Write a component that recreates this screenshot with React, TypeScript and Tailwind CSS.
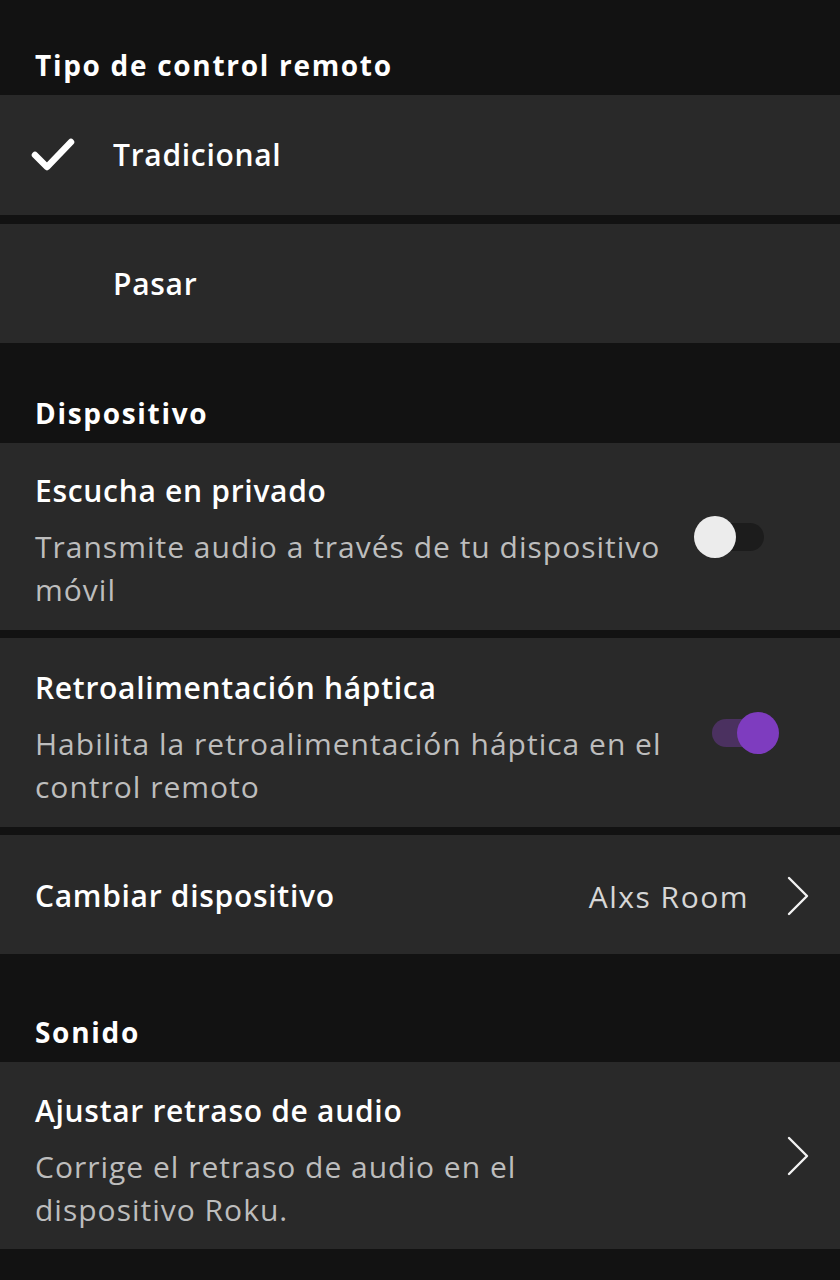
import React from "react";

const font = { fontFamily: '"Open Sans", "Liberation Sans", sans-serif' };

function SectionHeader({ title, h }: { title: string; h: string }) {
  return (
    <div className={`flex items-end px-[35px] pb-[12px] ${h}`}>
      <div className="text-[28px] leading-[36px] font-bold text-white tracking-[1.7px]">{title}</div>
    </div>
  );
}

function Toggle({ on }: { on: boolean }) {
  return (
    <div className="relative w-[50px] h-[28px]">
      <div className={`absolute inset-0 rounded-full ${on ? "bg-[#4b3160]" : "bg-[#1c1c1c]"}`} />
      <div
        className={`absolute top-1/2 -translate-y-1/2 w-[42px] h-[42px] rounded-full ${
          on ? "-right-[17px] bg-[#7e3cbf]" : "-left-[20px] bg-[#ececec]"
        }`}
      />
    </div>
  );
}

function Chevron() {
  return (
    <svg width="22" height="40" viewBox="0 0 22 40" fill="none">
      <polyline points="2,2 20,20 2,38" stroke="#f2f2f2" strokeWidth="2.4" strokeLinecap="round" strokeLinejoin="round" />
    </svg>
  );
}

const titleCls = "text-[30px] leading-[40px] font-semibold text-white tracking-[0.7px]";
const subCls = "text-[30px] leading-[43px] text-[#bdbdbd] tracking-[1px]";

export default function App() {
  return (
    <div style={font} className="w-[840px] h-[1280px] bg-[#121212] overflow-hidden">
      <SectionHeader title="Tipo de control remoto" h="h-[95px]" />
      <div className="flex flex-col gap-[9px]">
        <div className="h-[120px] bg-[#292929] flex items-center">
          <div className="w-[113px] pl-[31px]">
            <svg width="44" height="34" viewBox="0 0 44 34" fill="none">
              <polyline points="4,17 16,29 40,4" stroke="#ffffff" strokeWidth="6.5" strokeLinecap="round" strokeLinejoin="round" />
            </svg>
          </div>
          <div className={titleCls}>Tradicional</div>
        </div>
        <div className="h-[119px] bg-[#292929] flex items-center pl-[113px]">
          <div className={titleCls}>Pasar</div>
        </div>
      </div>

      <SectionHeader title="Dispositivo" h="h-[100px]" />
      <div className="flex flex-col gap-[8px]">
        <div className="h-[187px] bg-[#292929] flex items-center">
          <div className="w-[680px] pl-[35px] pt-[8px]">
            <div className={titleCls}>Escucha en privado</div>
            <div className={`mt-[14px] w-[640px] ${subCls}`}>
              Transmite audio a través de tu dispositivo móvil
            </div>
          </div>
          <div className="ml-[34px]">
            <Toggle on={false} />
          </div>
        </div>
        <div className="h-[189px] bg-[#292929] flex items-center">
          <div className="w-[680px] pl-[35px] pt-[10px]">
            <div className={titleCls}>Retroalimentación háptica</div>
            <div className={`mt-[14px] w-[640px] ${subCls}`}>
              Habilita la retroalimentación háptica en el control remoto
            </div>
          </div>
          <div className="ml-[32px]">
            <Toggle on={true} />
          </div>
        </div>
        <div className="h-[119px] bg-[#292929] flex items-center pl-[35px] pr-[31px] pt-[3px]">
          <div className={`flex-1 ${titleCls}`}>Cambiar dispositivo</div>
          <div className="text-[30px] tracking-[1.5px] text-[#d6d6d6] mr-[38px]">Alxs Room</div>
          <Chevron />
        </div>
      </div>

      <SectionHeader title="Sonido" h="h-[108px]" />
      <div className="h-[187px] bg-[#292929] flex items-center pr-[31px]">
        <div className="flex-1 pl-[35px] pt-[10px]">
          <div className={titleCls}>Ajustar retraso de audio</div>
          <div className={`mt-[14px] w-[560px] ${subCls}`}>
            Corrige el retraso de audio en el dispositivo Roku.
          </div>
        </div>
        <Chevron />
      </div>
    </div>
  );
}
